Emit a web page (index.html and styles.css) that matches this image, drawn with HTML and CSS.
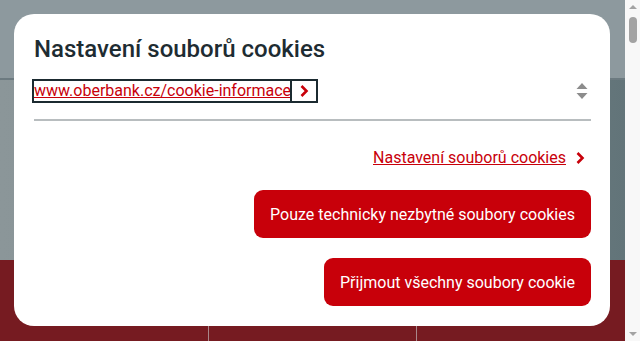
FILE: index.html
```html
<!DOCTYPE html>
<html lang="cs">
<head>
  <meta charset="UTF-8">
  <meta name="viewport" content="width=device-width, initial-scale=1.0">
  <title>Oberbank – cookies</title>
  <link rel="stylesheet" href="styles.css">
</head>
<body>
  <!-- Page behind the dialog -->
  <div class="page">
    <div class="hero">
      <div class="hero-top"></div>
      <div class="hero-body"></div>
    </div>
    <div class="footer">
      <div class="footer-col"></div>
      <div class="footer-col"></div>
      <div class="footer-col"></div>
    </div>
  </div>

  <!-- Fake scrollbar -->
  <div class="scrollbar">
    <div class="sb-arrow sb-up"></div>
    <div class="sb-thumb"></div>
    <div class="sb-track"></div>
    <div class="sb-arrow sb-down"></div>
  </div>

  <!-- Cookie dialog -->
  <div class="cookie-dialog">
    <h2 class="cookie-title">Nastavení souborů cookies</h2>

    <div class="cookie-info">
      <a class="info-link" href="#">www.oberbank.cz/cookie-informace<span class="info-chev"><svg viewBox="0 0 10 14" width="10" height="14"><polyline points="2.5 2 7.5 7 2.5 12" fill="none" stroke="#c8000a" stroke-width="2.6"></polyline></svg></span></a>
      <svg class="sort-icon" viewBox="0 0 12 16" width="12" height="16"><polygon points="6 0 11.5 6 0.5 6" fill="#8c8c8c"></polygon><polygon points="0.5 10 11.5 10 6 16" fill="#8c8c8c"></polygon></svg>
    </div>

    <div class="cookie-divider"></div>

    <div class="cookie-actions">
      <a class="settings-link" href="#">
        <span>Nastavení souborů cookies</span>
        <svg viewBox="0 0 10 14" width="10" height="14"><polyline points="2.5 2 7.5 7 2.5 12" fill="none" stroke="#c8000a" stroke-width="2.6"></polyline></svg>
      </a>
      <button class="cookie-btn">Pouze technicky nezbytné soubory cookies</button>
      <button class="cookie-btn">Přijmout všechny soubory cookie</button>
    </div>
  </div>
</body>
</html>
```

FILE: styles.css
```css
* {
  margin: 0;
  padding: 0;
  box-sizing: border-box;
  font-family: Roboto, "Liberation Sans", sans-serif;
}

body {
  display: flex;
  height: 341px;
  overflow: hidden;
  background-color: #8d999e;
}

.page {
  flex-grow: 1;
  display: flex;
  flex-direction: column;
}

.hero {
  height: 260px;
  display: flex;
  flex-direction: column;
}

.hero-top {
  height: 80px;
  background-color: #8d999e;
  border-bottom: 2px solid #6c7a80;
}

.hero-body {
  flex-grow: 1;
  background: linear-gradient(to right, #8b9699, #849094 40%, #627479);
}

.footer {
  flex-grow: 1;
  background-color: #761b21;
  display: grid;
  grid-template-columns: 208px 208px 1fr;
}

.footer-col + .footer-col {
  border-left: 1px solid #a9878a;
}

.scrollbar {
  width: 15px;
  background-color: #f8f8f8;
  display: flex;
  flex-direction: column;
  align-items: center;
}

.sb-arrow {
  width: 0;
  height: 0;
  border-left: 4px solid transparent;
  border-right: 4px solid transparent;
  margin: 5px 0;
}

.sb-up {
  border-bottom: 4px solid #a3a3a3;
}

.sb-down {
  border-top: 4px solid #a3a3a3;
}

.sb-thumb {
  width: 8px;
  height: 26px;
  margin-top: 3px;
  border-radius: 4px;
  background-color: #a3a3a3;
}

.sb-track {
  flex-grow: 1;
}

.cookie-dialog {
  position: fixed;
  left: 14px;
  top: 14px;
  width: 596px;
  height: 312px;
  background-color: #fff;
  border-radius: 20px;
  padding: 21px 19px 0 20px;
  display: flex;
  flex-direction: column;
}

.cookie-title {
  font-size: 24px;
  font-weight: 500;
  line-height: 28px;
  color: #1e2c32;
}

.cookie-info {
  margin-top: 18px;
  display: flex;
  align-items: center;
  justify-content: space-between;
  padding-right: 3px;
  height: 19px;
}

.info-link {
  font-size: 16px;
  line-height: 18px;
  color: #c8000a;
  text-decoration: underline;
  outline: 2px solid #1b2a30;
  display: inline-flex;
  align-items: center;
}

.info-chev {
  display: inline-flex;
  align-items: center;
  justify-content: center;
  width: 24px;
  height: 20px;
  margin-left: 1px;
  background-color: #fff;
  outline: 2px solid #1b2a30;
}

.sort-icon {
  display: block;
}

.cookie-divider {
  margin-top: 19px;
  height: 2px;
  background-color: #b8bdbf;
}

.cookie-actions {
  display: flex;
  flex-direction: column;
  align-items: flex-end;
  gap: 20px;
  margin-top: 27px;
}

.settings-link {
  display: flex;
  align-items: center;
  gap: 9px;
  font-size: 16px;
  line-height: 19px;
  color: #c8000a;
  padding-right: 6px;
  margin-bottom: 3px;
}

.settings-link span {
  text-decoration: underline;
}

.cookie-btn {
  height: 48px;
  padding: 0 16px;
  border: none;
  border-radius: 9px;
  background-color: #c8000a;
  color: #fff;
  font-size: 16px;
}
```
